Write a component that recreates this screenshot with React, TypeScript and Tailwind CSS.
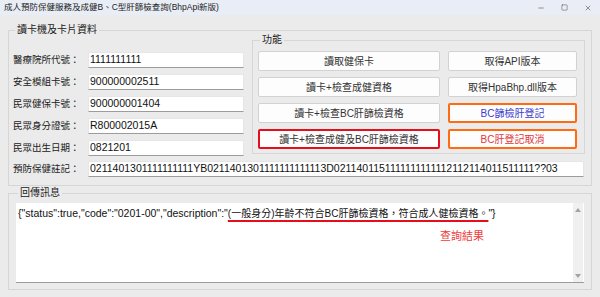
import { Minus, Square, X } from 'lucide-react';

const fields = [
  ['醫療院所代號：', '1111111111'],
  ['安全模組卡號：', '900000002511'],
  ['民眾健保卡號：', '900000001404'],
  ['民眾身分證號：', 'R800002015A'],
  ['民眾出生日期：', '0821201'],
];

const note =
  '0211401301111111111YB0211401301111111111113D0211401151111111111112112114011511111??03';

const inputCls =
  'h-[16px] bg-white border border-[#e6e6e6] border-b-[#9c9c9c] pl-[1px] flex items-center text-[10.5px] text-[#111] whitespace-nowrap overflow-hidden';

function Btn({ label, tone }: { label: string; tone?: 'red' | 'blue' | 'orange-red' }) {
  let cls = 'border border-[#d2d2d2] text-[#333]';
  if (tone === 'red') cls = 'border-2 border-[#e3101c] text-[#333]';
  if (tone === 'blue') cls = 'border-2 border-[#ff6a12] text-[#3b3bd0]';
  if (tone === 'orange-red') cls = 'border-2 border-[#ff6a12] text-[#e0383c]';
  return (
    <div className={`h-[20px] bg-[#fdfdfd] rounded-[2px] flex items-center justify-center text-[10px] ${cls}`}>
      {label}
    </div>
  );
}

function Arrow({ up }: { up?: boolean }) {
  return (
    <svg width="6" height="4" viewBox="0 0 6 4">
      <polygon points={up ? '0,4 6,4 3,0' : '0,0 6,0 3,4'} fill="#a3a3a3" />
    </svg>
  );
}

export default function App() {
  return (
    <div
      className="w-[600px] h-[297px] bg-[#ebebeb] overflow-hidden text-[#222]"
      style={{ fontFamily: '"Liberation Sans", "Noto Sans CJK TC", sans-serif' }}
    >
      {/* title bar */}
      <div className="h-[15px] bg-[#e9eef6] flex items-center justify-between pl-[4px]">
        <span className="text-[8.5px] leading-[15px] text-[#222]">
          成人預防保健服務及成健B、C型肝篩檢查詢(BhpApi新版)
        </span>
        <div className="flex items-center">
          <Minus size={8} strokeWidth={1.5} className="text-[#333] mr-[16px]" />
          <Square size={7} strokeWidth={1.5} className="text-[#333] mr-[16px]" />
          <X size={8} strokeWidth={1.5} className="text-[#333] mr-[8px]" />
        </div>
      </div>

      {/* card reader group */}
      <fieldset className="mx-2 mt-[10px] border border-[#d6d6d6] pl-[4px] pr-[6px] pb-[8px]">
        <legend className="ml-[2px] px-[2px] text-[10px] leading-[10px]">讀卡機及卡片資料</legend>
        <div className="flex items-start">
          <div className="pt-[17px] flex flex-col gap-[6px]">
            {fields.map(([label, value]) => (
              <div key={label} className="flex items-center">
                <span className="w-[75px] text-[9.5px] whitespace-nowrap">{label}</span>
                <div className={`${inputCls} w-[156px]`}>{value}</div>
              </div>
            ))}
          </div>
          <fieldset className="ml-[8px] w-[333px] border border-[#d6d6d6] pl-[5px] pt-[6px] pb-[4px]">
            <legend className="ml-[2px] px-[2px] text-[10px] leading-[10px]">功能</legend>
            <div className="grid grid-cols-[182px_129px] gap-x-[8px] gap-y-[6px]">
              <Btn label="讀取健保卡" />
              <Btn label="取得API版本" />
              <Btn label="讀卡+檢查成健資格" />
              <Btn label="取得HpaBhp.dll版本" />
              <Btn label="讀卡+檢查BC肝篩檢資格" />
              <Btn label="BC篩檢肝登記" tone="blue" />
              <Btn label="讀卡+檢查成健及BC肝篩檢資格" tone="red" />
              <Btn label="BC肝登記取消" tone="orange-red" />
            </div>
          </fieldset>
        </div>
        <div className="flex items-center mt-[5px]">
          <span className="w-[75px] text-[9.5px] whitespace-nowrap">預防保健註記：</span>
          <div className={`${inputCls} flex-1 mr-[1px]`}>{note}</div>
        </div>
      </fieldset>

      {/* response group */}
      <fieldset className="mx-2 mt-[2px] border border-[#d6d6d6] px-[7px] pt-[5px] pb-[6px]">
        <legend className="ml-[2px] px-[2px] text-[10px] leading-[10px]">回傳訊息</legend>
        <div className="h-[80px] bg-white border-b border-[#9c9c9c] flex">
          <div className="flex-1 pl-[2px] pt-[3px]">
            <div className="text-[10.5px] leading-[14px] whitespace-nowrap text-[#111]">
              {'{"status":true,"code":"0201-00","description":"'}
              <span className="underline decoration-2 decoration-[#e3101c] underline-offset-[3px] text-[10px]">
                (一般身分)年齡不符合BC肝篩檢資格，符合成人健檢資格。
              </span>
              {'"}'}
            </div>
            <div className="mt-[8px] ml-[422px] text-[11px] leading-[14px] text-[#f03c3c]">查詢結果</div>
          </div>
          <div className="w-[10px] bg-[#f0f0f0] flex flex-col items-center justify-between pt-[5px] pb-[4px] mr-[1px]">
            <Arrow up />
            <Arrow />
          </div>
        </div>
      </fieldset>
    </div>
  );
}
